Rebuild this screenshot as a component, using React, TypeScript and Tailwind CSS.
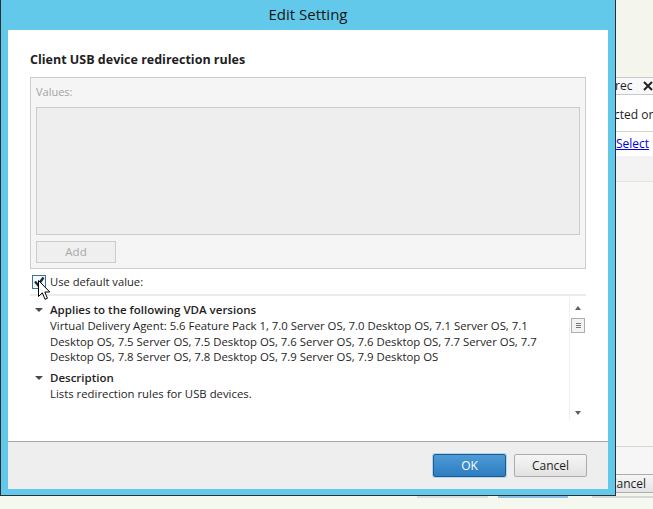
const versionLines = [
  'Virtual Delivery Agent: 5.6 Feature Pack 1, 7.0 Server OS, 7.0 Desktop OS, 7.1 Server OS, 7.1',
  'Desktop OS, 7.5 Server OS, 7.5 Desktop OS, 7.6 Server OS, 7.6 Desktop OS, 7.7 Server OS, 7.7',
  'Desktop OS, 7.8 Server OS, 7.8 Desktop OS, 7.9 Server OS, 7.9 Desktop OS',
]

const Caret = () => (
  <span className="mt-[6px] h-0 w-0 shrink-0 border-x-[4px] border-t-[4px] border-x-transparent border-t-[#4a4a4a]" />
)

const Section = ({ title, lines }: { title: string; lines: string[] }) => (
  <div className="flex gap-[7px] pl-[5px]">
    <Caret />
    <div className="flex flex-col">
      <div className="h-[16px] text-[11.5px] font-semibold leading-[16px] text-[#1e1e1e]">{title}</div>
      {lines.map((line) => (
        <div key={line} className="whitespace-nowrap text-[11.35px] leading-[15.5px] text-[#1e1e1e]">
          {line}
        </div>
      ))}
    </div>
  </div>
)

const Scrollbar = () => (
  <div className="flex w-[17px] shrink-0 flex-col items-center border-l border-[#f0f0f0] pb-[5px] pt-[9px]">
    <span className="h-0 w-0 border-x-[3px] border-b-[4px] border-x-transparent border-b-[#606060]" />
    <div className="mt-[8px] flex h-[15px] w-[14px] flex-col items-center justify-center gap-[1px] border border-[#adadad] bg-[#f3f3f3]">
      <span className="h-px w-[5px] bg-[#777]" />
      <span className="h-px w-[5px] bg-[#777]" />
      <span className="h-px w-[5px] bg-[#777]" />
    </div>
    <div className="flex-1" />
    <span className="h-0 w-0 border-x-[3px] border-t-[4px] border-x-transparent border-t-[#606060]" />
  </div>
)

const Dialog = () => (
  <div className="flex w-[616px] shrink-0 flex-col border-x border-b border-[#2b3034] bg-[#63c9ea] px-[7px] pb-[6px]">
    <div className="flex h-[30px] shrink-0 items-center justify-center pb-[1px] text-[15px] text-[#151515]">
      Edit Setting
    </div>
    <div className="flex flex-1 flex-col bg-white">
      <div className="flex flex-1 flex-col px-[22px] pt-[22px]">
        <h2 className="h-[16px] whitespace-nowrap text-[12.5px] font-bold leading-[16px] text-[#1e1e1e]">
          Client USB device redirection rules
        </h2>

        {/* Values group */}
        <div className="mt-[9px] flex h-[192px] flex-col border border-[#cdcdcd] bg-[#f5f5f5] px-[5px] pt-[6px]">
          <div className="h-[16px] text-[11px] leading-[16px] text-[#a3a3a3]">Values:</div>
          <div className="mt-[7px] h-[128px] border border-[#cbcbcb] bg-[#eeeeee]" />
          <button className="mt-[6px] flex h-[22px] w-[80px] items-center justify-center border border-[#cccccc] bg-[#efefef] text-[11.5px] text-[#a8a8a8]">
            Add
          </button>
        </div>

        {/* Use default value */}
        <div className="mt-[1px] flex h-[24px] items-center gap-[4px] pl-[2px]">
          <svg width="14" height="14" viewBox="0 0 14 14">
            <rect x="0.5" y="0.5" width="13" height="13" fill="#f4f9fd" stroke="#3f6f9e" />
            <path d="M3 6.5 L6 10 L11.5 2.5" fill="none" stroke="#1d2b3a" strokeWidth="2.4" />
          </svg>
          <span className="text-[11.2px] text-[#1e1e1e]">Use default value:</span>
        </div>
        <div className="h-[2px] bg-[#ebebeb]" />

        {/* Help area */}
        <div className="mt-[1px] flex h-[123px]">
          <div className="flex flex-1 flex-col gap-[5px] overflow-hidden pt-[5px]">
            <Section title="Applies to the following VDA versions" lines={versionLines} />
            <Section title="Description" lines={['Lists redirection rules for USB devices.']} />
          </div>
          <Scrollbar />
        </div>
      </div>

      {/* Footer */}
      <div className="flex h-[48px] shrink-0 items-center justify-end gap-[8px] border-t border-[#a3a8b0] bg-[#efeeee] pr-[21px]">
        <button className="flex h-[23px] w-[73px] items-center justify-center rounded-[2px] border border-[#24598a] bg-gradient-to-b from-[#4d9bd6] to-[#2c7cc0] text-[12px] text-white shadow-[0_0_0_1px_#a9d6f3]">
          OK
        </button>
        <button className="flex h-[23px] w-[73px] items-center justify-center rounded-[2px] border border-[#acacac] bg-gradient-to-b from-[#f6f6f6] to-[#e2e2e2] text-[12px] text-[#1e1e1e]">
          Cancel
        </button>
      </div>
    </div>
  </div>
)

const BackWindow = () => (
  <div className="flex flex-1 flex-col overflow-hidden bg-[#f4f6ee] text-[12px] text-[#1e1e1e]">
    <div className="h-[77px] shrink-0" />
    <div className="flex h-[18px] shrink-0 items-center justify-between border-y border-[#c9c9c9] bg-[#f8f8f8]">
      <span className="-ml-[1px]">rec</span>
      <svg width="10" height="10" viewBox="0 0 10 10">
        <path d="M1 1 L9 9 M9 1 L1 9" stroke="#222" strokeWidth="2" />
      </svg>
    </div>
    <div className="flex h-[37px] shrink-0 items-center whitespace-nowrap border-b border-[#d4d4d4] bg-white pt-[4px]">
      <span className="-ml-[2px]">cted on</span>
    </div>
    <div className="flex h-[24px] shrink-0 items-center bg-white">
      <span className="text-[#0000ee] underline">Select</span>
    </div>
    <div className="h-[26px] shrink-0 border-b border-[#e3e3e3] bg-[#f3f3f3]" />
    <div className="h-[264px] shrink-0 bg-[#f7f7f5]" />
    <div className="h-[28px] shrink-0 border-t border-[#d6d6d6] bg-[#f6f6f6]" />
    <div className="flex h-[19px] shrink-0 items-center whitespace-nowrap border-y border-[#acacac] bg-gradient-to-b from-[#f6f6f6] to-[#e4e4e4]">
      <span className="-ml-[7px]">Cancel</span>
    </div>
  </div>
)

export default function App() {
  return (
    <div className="relative flex h-[509px] w-[653px] flex-col overflow-hidden bg-[#f5f8ef] font-['Open_Sans',sans-serif]">
      <div className="flex h-[496px] shrink-0">
        <Dialog />
        <BackWindow />
      </div>
      <div className="flex h-[2px] shrink-0">
        <div className="w-[417px]" />
        <div className="w-[71px] bg-[#dcdcdc]" />
        <div className="w-[10px]" />
        <div className="w-[70px] bg-[#8fc0e2]" />
        <div className="w-[24px]" />
        <div className="flex-1 bg-[#d6d6d6]" />
      </div>

      {/* mouse pointer */}
      <svg className="absolute left-[38px] top-[280px]" width="13" height="21" viewBox="0 0 13 21">
        <path
          d="M0.5 0.5 L0.5 16.5 L4.3 12.8 L7 19.3 L9.4 18.3 L6.8 12 L11.8 12 Z"
          fill="#fff"
          stroke="#000"
          strokeWidth="1"
        />
      </svg>
    </div>
  )
}
